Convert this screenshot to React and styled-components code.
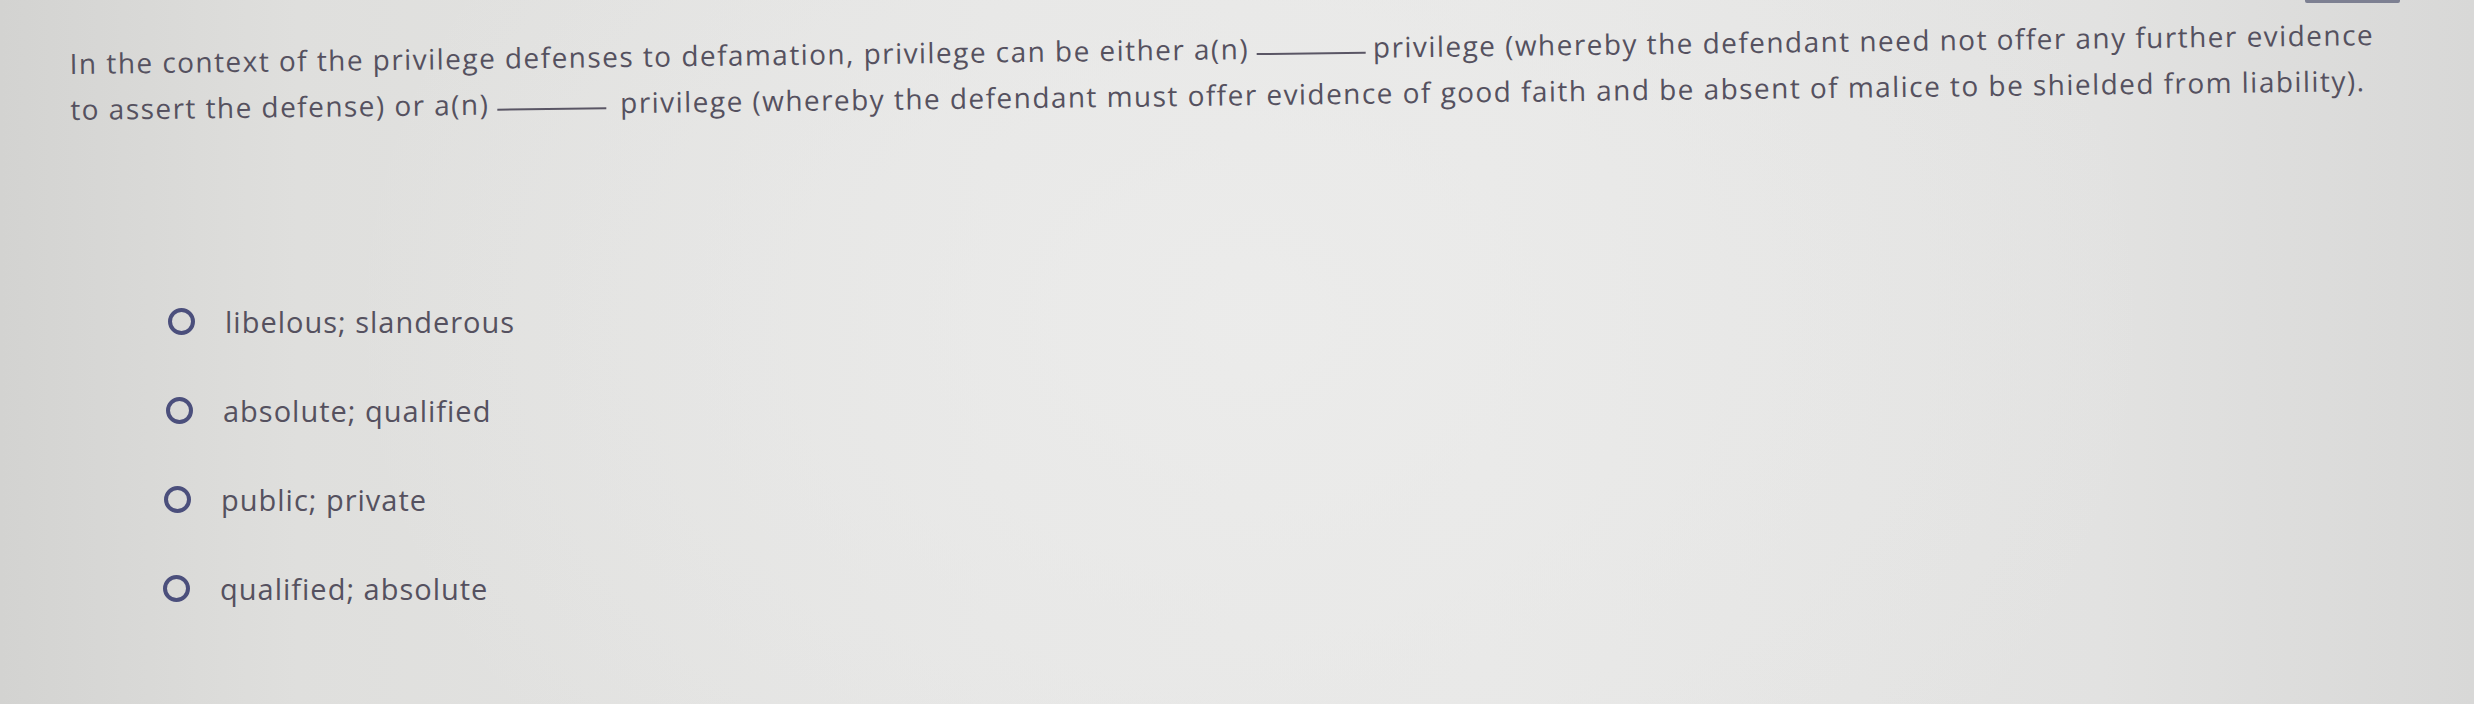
import React from "react";
import styled, { createGlobalStyle } from "styled-components";

const Global = createGlobalStyle`
  html, body { margin: 0; padding: 0; }
  body {
    width: 2474px;
    height: 704px;
    overflow: hidden;
    font-family: "Open Sans", Lato, "Liberation Sans", sans-serif;
  }
`;

const Page = styled.main`
  position: relative;
  box-sizing: border-box;
  width: 2474px;
  height: 704px;
  padding: 40px 0 0 70px;
  background:
    radial-gradient(ellipse 900px 700px at 1250px 320px, rgba(236,236,235,0.9), rgba(236,236,235,0) 100%),
    linear-gradient(90deg, #d3d3d1 0%, #dfdfdd 12%, #e5e5e4 40%, #e7e7e6 60%, #e2e2e1 85%, #d8d8d7 100%);
  display: flex;
  flex-direction: column;
`;

const TopTab = styled.div`
  position: absolute;
  top: 0;
  left: 2305px;
  width: 95px;
  height: 3px;
  background: #7d8092;
  border-radius: 0 0 2px 2px;
`;

const Question = styled.p`
  margin: 0;
  font-size: 28px;
  line-height: 46px;
  letter-spacing: 1.45px;
  color: #55515f;
  white-space: nowrap;
  transform: rotate(-0.72deg);
  transform-origin: 0 50%;
`;

const Blank = styled.span`
  display: inline-block;
  width: 109px;
  height: 2px;
  margin: 0 ${(p) => p.after}px 0 8px;
  background: #5a5665;
  vertical-align: 4px;
`;

const Options = styled.ul`
  list-style: none;
  margin: 168px 0 0 0;
  padding: 0 0 0 98px;
  display: flex;
  flex-direction: column;
  gap: 47px;
`;

const Option = styled.li`
  display: flex;
  align-items: center;
  gap: 30px;
  height: 42px;
  margin-left: ${(p) => p.shift}px;
  font-size: 29px;
  letter-spacing: 1px;
  color: #55515f;
`;

const Radio = styled.span`
  box-sizing: border-box;
  flex: none;
  width: 27px;
  height: 27px;
  border: 4px solid #4b4f7c;
  border-radius: 50%;
`;

const options = [
  { label: "libelous; slanderous", shift: 0 },
  { label: "absolute; qualified", shift: -2 },
  { label: "public; private", shift: -4 },
  { label: "qualified; absolute", shift: -5 },
];

export default function App() {
  return (
    <>
      <Global />
      <Page>
        <TopTab />
        <Question>
          In the context of the privilege defenses to defamation, privilege can be either a(n)
          <Blank after={7} />
          privilege (whereby the defendant need not offer any further evidence
          <br />
          to assert the defense) or a(n)
          <Blank after={14} />
          privilege (whereby the defendant must offer evidence of good faith and be absent of malice to be shielded from liability).
        </Question>
        <Options>
          {options.map((o) => (
            <Option key={o.label} shift={o.shift}>
              <Radio />
              <span>{o.label}</span>
            </Option>
          ))}
        </Options>
      </Page>
    </>
  );
}
